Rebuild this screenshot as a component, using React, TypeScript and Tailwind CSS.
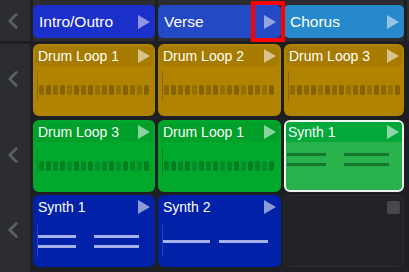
import { ChevronLeft } from "lucide-react";

type Tone = {
  body: string;
  strip: string;
};

const GOLD: Tone = { body: "bg-[#b08300]", strip: "bg-[#a67b00]" };
const GREEN: Tone = { body: "bg-[#00a82c]", strip: "bg-[#00a02a]" };
const BLUE: Tone = { body: "bg-[#0021a8]", strip: "bg-[#0021a8]" };

const DASHES = [0.2, 0.25, 0.2, 0.25, 0.15, 0.25, 0.2, 0.25, 0.15, 0.2, 0.25, 0.15, 0.25, 0.2, 0.15, 0.25];

function Play({ opacity = 0.55 }: { opacity?: number }) {
  return (
    <svg width="12" height="14" viewBox="0 0 12 14" className="shrink-0">
      <polygon points="0,0 12,7 0,14" fill="white" fillOpacity={opacity} />
    </svg>
  );
}

function Chevron() {
  return <ChevronLeft size={26} strokeWidth={2.6} className="text-[#5b5e63]" />;
}

function Beats() {
  return (
    <div className="flex h-full items-center pl-[2px]">
      <div className="h-[30px] w-[1px] self-start mt-[5px] bg-black/20" />
      <div className="ml-[1px] flex gap-[2px]">
        {DASHES.map((o, i) => (
          <div
            key={i}
            className="h-[10px] w-[5px] rounded-[2px] bg-black"
            style={{ opacity: o }}
          />
        ))}
      </div>
    </div>
  );
}

function Notes({
  color,
  segs,
  double,
}: {
  color: string;
  segs: [number, number][];
  double: boolean;
}) {
  return (
    <div className="flex h-full items-center pl-[2px]">
      <div className="h-[32px] w-[1px] bg-white/15" />
      {segs.map(([gap, w], i) => (
        <div key={i} className="flex flex-col gap-[7px]" style={{ marginLeft: gap, width: w }}>
          <div className={`h-[3px] ${color}`} />
          {double && <div className={`h-[3px] ${color}`} />}
        </div>
      ))}
    </div>
  );
}

function Clip({
  title,
  tone,
  children,
}: {
  title: string;
  tone: Tone;
  children?: React.ReactNode;
}) {
  return (
    <div className={`flex h-[72px] flex-col rounded-[6px] p-[2px] ${tone.body}`}>
      <div className={`flex h-[20px] items-center justify-between rounded-[4px] pl-[3px] pr-[3px] ${tone.strip}`}>
        <span className="text-[14px] leading-none text-white">{title}</span>
        <Play />
      </div>
      <div className="flex-1">{children}</div>
    </div>
  );
}

function Scene({ label, bg }: { label: string; bg: string }) {
  return (
    <div className="bg-[#2b2d31] pt-[5px] pb-[3px]">
      <div className={`flex h-[33px] items-center justify-between rounded-[5px] pl-[6px] pr-[5px] ${bg}`}>
        <span className="text-[15.5px] leading-none text-white">{label}</span>
        <Play opacity={0.5} />
      </div>
    </div>
  );
}

export default function App() {
  return (
    <div
      className="relative h-[272px] w-[409px] overflow-hidden bg-[#1d1f23]"
      style={{ fontFamily: '"Liberation Sans", Arial, sans-serif' }}
    >
      {/* scene header */}
      <div className="grid h-[41px] grid-cols-[30px_122px_123px_120px_2px] gap-x-[3px]">
        <div className="flex items-center bg-[#2b2d31]">
          <Chevron />
        </div>
        <Scene label="Intro/Outro" bg="bg-[#1b2fcb]" />
        <Scene label="Verse" bg="bg-[#2449c4]" />
        <Scene label="Chorus" bg="bg-[#2689cb]" />
        <div className="bg-[#2b2d31]" />
      </div>

      {/* clip grid */}
      <div className="mt-[3px] flex h-[228px] gap-x-[3px]">
        <div className="flex w-[30px] flex-col gap-y-[3px] bg-[#2b2d31]">
          {[0, 1, 2].map((r) => (
            <div key={r} className={`flex h-[72px] items-center ${r === 0 ? "pb-[3px]" : ""}`}>
              <Chevron />
            </div>
          ))}
        </div>
        <div className="grid grid-cols-[122px_123px_120px] grid-rows-[72px_72px_72px] gap-x-[3px] gap-y-[3.5px]">
          <Clip title="Drum Loop 1" tone={GOLD}>
            <Beats />
          </Clip>
          <Clip title="Drum Loop 2" tone={GOLD}>
            <Beats />
          </Clip>
          <Clip title="Drum Loop 3" tone={GOLD}>
            <Beats />
          </Clip>

          <Clip title="Drum Loop 3" tone={GREEN}>
            <Beats />
          </Clip>
          <Clip title="Drum Loop 1" tone={GREEN}>
            <Beats />
          </Clip>
          <div className="flex h-[72px] flex-col rounded-[6px] border-2 border-[#eef3ef] bg-[#29b24c]">
            <div className="flex h-[20px] items-center justify-between rounded-t-[4px] bg-[#03a83a] pl-[2px] pr-[3px]">
              <span className="text-[14px] leading-none text-white">Synth 1</span>
              <Play />
            </div>
            <div className="flex-1">
              <div className="flex h-full items-start pt-[11px] pl-[1px]">
                <div className="flex w-[39px] flex-col gap-[7px]">
                  <div className="h-[3px] bg-[#187530]" />
                  <div className="h-[3px] bg-[#187530]" />
                </div>
                <div className="ml-[18px] flex w-[45px] flex-col gap-[7px]">
                  <div className="h-[3px] bg-[#187530]" />
                  <div className="h-[3px] bg-[#187530]" />
                </div>
              </div>
            </div>
          </div>

          <Clip title="Synth 1" tone={BLUE}>
            <Notes color="bg-[#a4b1ea]" double segs={[[0, 38], [18, 45]]} />
          </Clip>
          <Clip title="Synth 2" tone={BLUE}>
            <Notes color="bg-[#a4b1ea]" double={false} segs={[[0, 47], [9, 49]]} />
          </Clip>
          <div className="flex h-[72px] justify-end rounded-[6px] border border-[#2c2e32] bg-[#202225] pt-[5px] pr-[3px]">
            <div className="h-[13px] w-[13px] rounded-[2px] bg-[#46484b]" />
          </div>
        </div>
      </div>

      {/* highlight annotation */}
      <div className="absolute left-[251px] top-[1px] h-[41px] w-[34px] border-4 border-[#ff0000]" />
    </div>
  );
}
